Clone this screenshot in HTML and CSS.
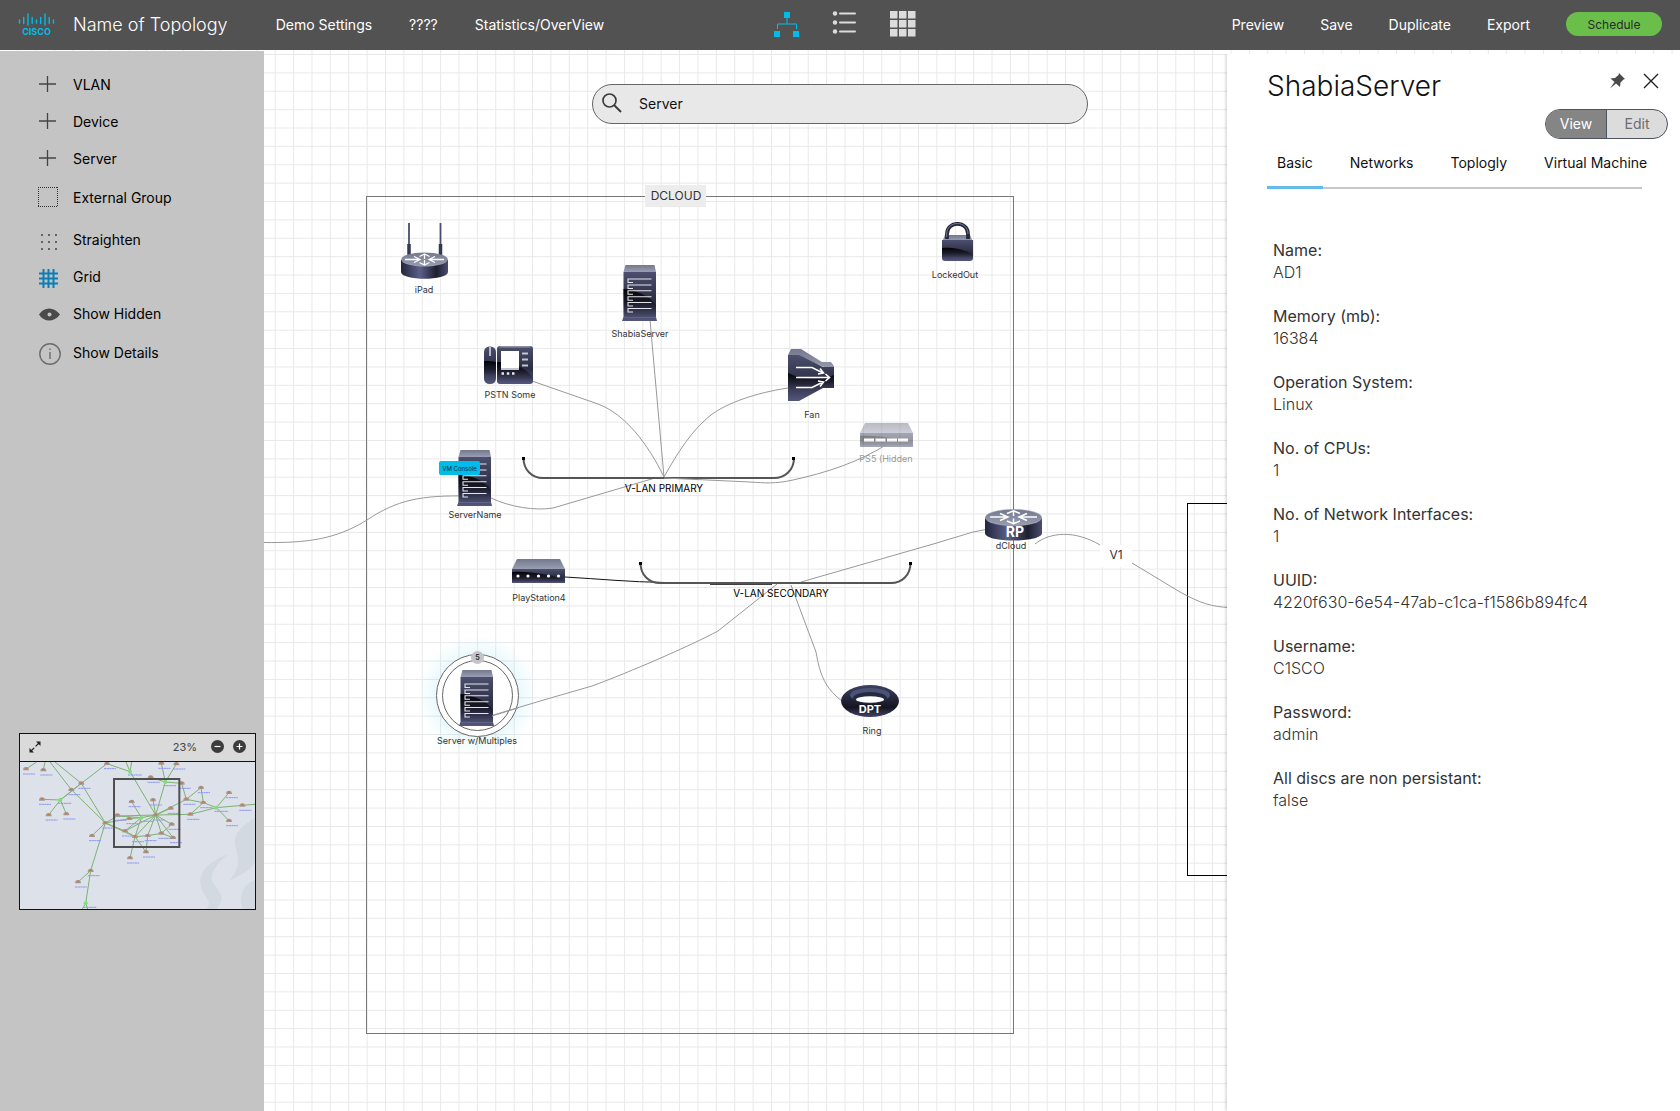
FILE: index.html
```
<!DOCTYPE html>
<html lang="en">
<head>
    <meta charset="UTF-8">
    <meta name="viewport" content="width=device-width, initial-scale=1.0">
    <title>Name of Topology</title>
    <link rel="stylesheet" href="styles.css">
</head>
<body>
    <!-- Top bar -->
    <header class="topbar">
        <div class="topbar-left">
            <svg class="logo" width="37" height="24" viewBox="0 0 37 24" role="img" aria-label="Cisco">
                <path d="M1.5 8v3M5.7 5.5v6M10 2v11M14.2 5.5v6M18.5 8v3M22.7 5.5v6M27 2v11M31.2 5.5v6M35.5 8v3" stroke="#00bceb" stroke-width="1.4" stroke-linecap="round"/>
                <text class="logo-text" x="18.5" y="22.5" text-anchor="middle">CISCO</text>
            </svg>
            <h1 class="topology-name">Name of Topology</h1>
            <nav class="topbar-nav">
                <a href="#">Demo Settings</a>
                <a href="#">????</a>
                <a href="#">Statistics/OverView</a>
            </nav>
        </div>

        <div class="view-switch">
            <button type="button" aria-label="Topology view">
                <svg width="26" height="26" viewBox="0 0 26 26">
                    <path d="M10 1h6v6h-6zM0 20h6v6H0zM19 20h6v6h-6z" fill="#00bceb"/>
                    <path d="M13 7v6M3.500 18v-5h19v5" fill="none" stroke="#00bceb"/>
                </svg>
            </button>
            <button type="button" aria-label="List view">
                <svg width="26" height="26" viewBox="0 0 26 26">
                    <g fill="#dcdcdc"><circle cx="3" cy="2.500" r="2.200"/><circle cx="3" cy="11.500" r="2.200"/><circle cx="3" cy="20.500" r="2.200"/></g>
                    <path d="M8 2.500h15M8 11.500h15M8 20.500h15" stroke="#dcdcdc" stroke-width="2" stroke-linecap="round"/>
                </svg>
            </button>
            <button type="button" aria-label="Tile view">
                <svg width="26" height="26" viewBox="0 0 26 26">
                    <path d="M0 0h7.500v7.500H0zM9 0h7.500v7.500H9zM18 0h7.500v7.500H18zM0 9h7.500v7.500H0zM9 9h7.500v7.500H9zM18 9h7.500v7.500H18zM0 18h7.500v7.500H0zM9 18h7.500v7.500H9zM18 18h7.500v7.500H18z" fill="#dcdcdc"/>
                </svg>
            </button>
        </div>

        <div class="topbar-actions">
            <button type="button">Preview</button>
            <button type="button">Save</button>
            <button type="button">Duplicate</button>
            <button type="button">Export</button>
            <button type="button" class="schedule-btn">Schedule</button>
        </div>
    </header>

    <main class="workspace">
        <!-- Canvas -->
        <svg class="canvas" role="img" aria-label="Topology canvas">
            <defs>
                <pattern id="grid" x="17.4" y="4" width="18.38" height="18.38" patternUnits="userSpaceOnUse">
                    <path d="M0.500 0v18.380M0 0.500h18.380" stroke="#e8e8e8"/>
                </pattern>
                <linearGradient id="top" x1="0" y1="0" x2="0" y2="1">
                    <stop offset="0" stop-color="#74788c"/>
                    <stop offset="1" stop-color="#9a9eb2"/>
                </linearGradient>
                <linearGradient id="body" x1="0" y1="0" x2="0" y2="1">
                    <stop offset="0" stop-color="#4c4f6e"/>
                    <stop offset="0.6" stop-color="#2b2d42"/>
                    <stop offset="1" stop-color="#54577c"/>
                </linearGradient>
                <linearGradient id="gloss" x1="0" y1="0" x2="0" y2="1">
                    <stop offset="0" stop-color="#000"/>
                    <stop offset="1" stop-color="#101020" stop-opacity="0"/>
                </linearGradient>
                <linearGradient id="drum" x1="0" y1="0" x2="1" y2="0">
                    <stop offset="0" stop-color="#23253a"/>
                    <stop offset="0.4" stop-color="#5c6089"/>
                    <stop offset="0.75" stop-color="#1e2030"/>
                    <stop offset="1" stop-color="#4a4d70"/>
                </linearGradient>
                <linearGradient id="torus" x1="0" y1="0" x2="0" y2="1">
                    <stop offset="0" stop-color="#3d4262"/>
                    <stop offset="0.7" stop-color="#14151f"/>
                    <stop offset="1" stop-color="#43466a"/>
                </linearGradient>
                <radialGradient id="glow">
                    <stop offset="0.7" stop-color="#00bceb" stop-opacity="0.08"/>
                    <stop offset="1" stop-color="#00bceb" stop-opacity="0"/>
                </radialGradient>

                <symbol id="server" viewBox="0 0 35 56">
                    <path d="M3.500 0h29l1.500 7H1.500z" fill="url(#top)"/>
                    <path d="M1.500 7H34v45l1 4H0l1.500-4z" fill="url(#body)"/>
                    <path d="M1.500 24C14 25 28 31 34 40v12H1.500z" fill="url(#gloss)"/>
                    <path d="M1 52.500h33" stroke="#6a6d90" stroke-width=".7"/>
                    <path d="M11 17.500H6V14h23.500M11 23.500H6V20h23.500M11 29.300H6v-3.500h23.500M11 35.200H6v-3.500h23.500M11 41H6v-3.500h23.500M11 47H6v-3.500h23.500" fill="none" stroke="#e6e6ea" stroke-width="1.100"/>
                </symbol>
                <symbol id="router" viewBox="0 0 57 32">
                    <path d="M0 9v15c0 10 57 10 57 0V9z" fill="url(#drum)"/>
                    <ellipse cx="28.500" cy="8.500" rx="28.300" ry="8.200" fill="url(#top)" stroke="#b4b7c8" stroke-width=".5"/>
                    <path d="M5 8h17M15 4.500l8 3.500-8 3.500M52 8H35M42 4.500L34 8l8 3.500M28.500 7V2M22 4.500l6.500-2.800L35 4.500M28.500 9.500v5M22 12l6.500 2.800L35 12" fill="none" stroke="#fff" stroke-width="1.500"/>
                </symbol>
                <symbol id="antenna-router" viewBox="0 0 47 56">
                    <path d="M8 0v24M39.500 0v24" stroke="#4a4d6c" stroke-width="1.800"/>
                    <path d="M8 21v12M39.500 21v12" stroke="#34374f" stroke-width="3.500"/>
                    <path d="M0 37v12c0 9 47 9 47 0V37z" fill="url(#drum)"/>
                    <ellipse cx="23.500" cy="36.500" rx="23.300" ry="7" fill="url(#top)"/>
                    <path d="M4 36.500h14M13 33.500l6 3-6 3M43 36.500H29M34 33.500l-6 3 6 3M23.500 36v-5M18.500 33.500l5-2.500 5 2.500M23.500 37v5M18.500 39.500l5 2.500 5-2.500" fill="none" stroke="#fff" stroke-width="1.300"/>
                </symbol>
                <symbol id="phone" viewBox="0 0 49 38">
                    <rect width="12" height="37.500" y=".5" rx="5.500" fill="url(#body)"/>
                    <path d="M0 15c4 0 9 0 12 1v14H0z" fill="url(#gloss)"/>
                    <path d="M6 1v9" stroke="#dfe0e8" stroke-width="1.500"/>
                    <rect x="13" width="36" height="38" rx="3" fill="url(#body)"/>
                    <path d="M15.500.800h31" stroke="#9194a8" stroke-width="1.500"/>
                    <path d="M13 16c14 0 28 4 36 16v4H13z" fill="url(#gloss)"/>
                    <path d="M17 5h18v18H17z" fill="#fff"/>
                    <path d="M17 23h18M38 7.500h6M38 13.500h6M38 19.500h6" stroke="#c3c5d0" stroke-width="2"/>
                    <path d="M17.500 27.500h2.500M22.800 27.500h2.500M28 27.500h2.500" stroke="#e6e6ea" stroke-width="2.500"/>
                </symbol>
                <symbol id="fan" viewBox="0 0 46 52">
                    <path d="M3 0h10l21 13h9l3 4v5L11 8 0 6z" fill="url(#top)"/>
                    <path d="M0 6h11l24 12h11v21H35L11 52H0z" fill="url(#body)"/>
                    <path d="M0 24c14 7 32 8 46 2v13H0z" fill="url(#gloss)"/>
                    <path d="M8 18.500h16l11 5.500M8 28.500h33M8 38.500h16l11-5.500M32 19.500l3.500 4.500-5.500 1M37.500 25l4 3.500-4 3.500M30 32l5.500 1-3.500 4.500" fill="none" stroke="#fff" stroke-width="1.600"/>
                </symbol>
                <symbol id="lock" viewBox="0 0 31 39">
                    <path d="M3 13h25l2.500 6H.5z" fill="url(#top)"/>
                    <path d="M5 17v-5C5-1.500 26-1.500 26 12v5" fill="none" stroke="#25273a" stroke-width="3.800"/>
                    <path d="M4.700 15v-3C4.700-2 26-2 26 12" fill="none" stroke="#8c90a8" stroke-width=".8"/>
                    <path d="M0 18h31v18q0 3-3 3H3q-3 0-3-3z" fill="url(#body)"/>
                    <path d="M0 26c12-1 22 2 31 6v4H0z" fill="url(#gloss)"/>
                </symbol>
                <symbol id="switch" viewBox="0 0 53 24">
                    <path d="M5 0h43l5 10H0z" fill="url(#top)"/>
                    <path d="M0 10h53v14H0z" fill="url(#body)"/>
                    <path d="M0 13c20-1 40 3 53 8v3H0z" fill="url(#gloss)"/>
                </symbol>
                <symbol id="ring" viewBox="0 0 58 32">
                    <ellipse cx="29" cy="16" rx="29" ry="16" fill="url(#torus)"/>
                    <ellipse cx="29" cy="10" rx="20" ry="7" fill="#4c5275"/>
                    <ellipse cx="29" cy="13" rx="17" ry="6" fill="#262a40"/>
                    <ellipse cx="29" cy="14.500" rx="14" ry="3.200" fill="#fff"/>
                </symbol>
            </defs>

            <rect width="100%" height="100%" fill="url(#grid)"/>

            <!-- Diagram, measured from the top of the window -->
            <g transform="translate(0 -50)">
                <rect class="zone" x="366.500" y="196.500" width="647" height="837"/>
                <rect x="645" y="185" width="61" height="22" fill="#ededed"/>
                <text class="zone-label" x="676" y="200">DCLOUD</text>
                <rect class="zone zone-dark" x="1187.500" y="503.500" width="647" height="372"/>

                <circle cx="477.500" cy="695.500" r="60" fill="url(#glow)"/>
                <circle cx="477.500" cy="695.500" r="41" fill="#fff" stroke="#666"/>
                <circle cx="477.500" cy="695.500" r="35" fill="none" stroke="#666"/>

                <!-- Links -->
                <g class="links">
                    <path d="M264 542.500C305 543 335 540 367 520C397 500 420 495 470 496"/>
                    <path d="M491 498C510 507 535 511 553 508L655 478"/>
                    <path d="M532 381L598 404C625 414 648 444 664 477"/>
                    <path d="M650 320L664 477"/>
                    <path d="M788 388C755 393 727 403 711 415C692 430 678 452 664 477"/>
                    <path d="M801 582L935 543.500L973 532L986 529.500"/>
                    <path d="M1035 544C1050 532 1075 530 1100 545M1132 563L1180 592C1200 603 1212 607 1230 607.500"/>
                    <path d="M490 716L547 699L592 686C630 672 690 646 718 631L777 584"/>
                    <path d="M791 585L816 652C820 675 825 688 842 701"/>
                    <path class="link-dark" d="M565 577C600 579 630 582 665 582.500M710 584.300H772"/>
                </g>

                <!-- VLAN rails -->
                <g class="rails">
                    <path d="M523.500 458C523.500 470 532 478 543 478H774C785 478 794 470 794 458"/>
                    <path d="M640.500 563C640.500 575 649 583 660 583H891C902 583 910.500 575 910.500 563"/>
                </g>
                <path d="M522 457h3v3h-3zM792 457h3v3h-3zM639 562h3v3h-3zM909 562h3v3h-3z"/>
                <text class="rail-label" x="664" y="492">V-LAN PRIMARY</text>
                <text class="rail-label" x="781" y="597">V-LAN SECONDARY</text>

                <!-- Nodes -->
                <use href="#antenna-router" x="401" y="223" width="47" height="56"/>
                <text class="node-label" x="424" y="293">iPad</text>

                <use href="#server" x="622" y="265" width="35" height="56"/>
                <text class="node-label" x="640" y="337">ShabiaServer</text>

                <use href="#lock" x="942" y="222" width="31" height="39"/>
                <text class="node-label" x="955" y="278">LockedOut</text>

                <use href="#phone" x="484" y="346" width="49" height="38"/>
                <text class="node-label" x="510" y="398">PSTN Some</text>

                <use href="#fan" x="788" y="349" width="46" height="52"/>
                <text class="node-label" x="812" y="418">Fan</text>

                <g opacity="0.5">
                    <use href="#switch" x="860" y="423" width="53" height="24"/>
                    <path d="M864 440h10M875.500 440h10M887 440h10M898 440h10" stroke="#fff" stroke-width="3"/>
                    <text class="node-label" x="886" y="462">PS5 (Hidden</text>
                </g>
                <path class="link" d="M889 443C860 462 825 473 793 480C775 484 765 483 750 482L664 478"/>

                <use href="#server" x="457" y="450" width="35" height="56"/>
                <text class="node-label" x="475" y="518">ServerName</text>

                <use href="#switch" x="512" y="559" width="53" height="24"/>
                <g fill="#fff"><circle cx="518" cy="576" r="1.600"/><circle cx="528" cy="576" r="1.600"/><circle cx="538.500" cy="576" r="1.600"/><circle cx="548.500" cy="576" r="1.600"/><circle cx="558.500" cy="576" r="1.600"/></g>
                <text class="node-label" x="539" y="601">PlayStation4</text>

                <use href="#router" x="985" y="509" width="57" height="32"/>
                <text class="badge-text badge-rp" x="1015" y="537">RP</text>
                <text class="node-label" x="1011" y="549">dCloud</text>

                <rect x="1100" y="545" width="32" height="22" fill="#fff"/>
                <text class="zone-label" x="1116" y="559">V1</text>

                <use href="#ring" x="841" y="685" width="58" height="32"/>
                <text class="badge-text" x="870" y="713">DPT</text>
                <text class="node-label" x="872" y="734">Ring</text>

                <use href="#server" x="459" y="670" width="35" height="56"/>
                <path class="link" d="M492 716L518 708"/>
                <circle cx="477.500" cy="657.500" r="6.500" fill="#c4c4c4"/>
                <text class="count" x="477.500" y="660">5</text>
                <text class="node-label" x="477" y="744">Server w/Multiples</text>
            </g>
        </svg>
        <button type="button" class="vm-console">VM Console</button>

        <!-- Search -->
        <form class="search" role="search">
            <label for="search-input" aria-label="Search">
                <svg width="20" height="20" viewBox="0 0 20 20">
                    <circle cx="7.500" cy="7.500" r="6.500" fill="none" stroke="#3c3c3c" stroke-width="1.700"/>
                    <path d="M12 12l7 7" stroke="#3c3c3c" stroke-width="2"/>
                </svg>
            </label>
            <input type="text" id="search-input" name="search" value="Server">
        </form>

        <!-- Tools -->
        <aside class="sidebar">
            <div class="tool-group">
                <button type="button" class="tool">
                    <svg width="24" height="24" viewBox="0 0 24 24"><path d="M10.500 3v16M2 11h17" stroke="#444" stroke-width="1.300"/></svg>
                    VLAN
                </button>
                <button type="button" class="tool">
                    <svg width="24" height="24" viewBox="0 0 24 24"><path d="M10.500 3v16M2 11h17" stroke="#444" stroke-width="1.300"/></svg>
                    Device
                </button>
                <button type="button" class="tool">
                    <svg width="24" height="24" viewBox="0 0 24 24"><path d="M10.500 3v16M2 11h17" stroke="#444" stroke-width="1.300"/></svg>
                    Server
                </button>
                <button type="button" class="tool tool-tall">
                    <svg width="24" height="24" viewBox="0 0 24 24"><path d="M1 1.500h20M1 20.500h20M1.500 1v20M20.500 1v20" stroke="#333" stroke-dasharray="1 1"/></svg>
                    External Group
                </button>
            </div>
            <div class="tool-group">
                <button type="button" class="tool">
                    <svg width="24" height="24" viewBox="0 0 24 24"><path d="M5 7h0M12 7h0M19 7h0M5 14h0M12 14h0M19 14h0M5 21h0M12 21h0M19 21h0" stroke="#444" stroke-width="2" stroke-linecap="round"/></svg>
                    Straighten
                </button>
                <button type="button" class="tool">
                    <svg width="24" height="24" viewBox="0 0 24 24"><path d="M6.500 4v19M11.500 4v19M16.500 4v19M2 8.500h19M2 13.500h19M2 18.500h19" stroke="#0a7eb5" stroke-width="2"/></svg>
                    Grid
                </button>
                <button type="button" class="tool">
                    <svg width="24" height="24" viewBox="0 0 24 24"><path d="M2 12.500C7 4.500 17 4.500 23 12.500 17 20.500 7 20.500 2 12.500z" fill="#4a4a4a"/><circle cx="12.500" cy="12.500" r="2" fill="#c4c4c4"/></svg>
                    Show Hidden
                </button>
                <button type="button" class="tool tool-tall">
                    <svg width="24" height="24" viewBox="0 0 24 24"><circle cx="13" cy="13" r="10.200" fill="none" stroke="#6c6c6c" stroke-width="1.400"/><path d="M13 11v7M13 7.500v1.500" stroke="#6c6c6c" stroke-width="1.400"/></svg>
                    Show Details
                </button>
            </div>

            <!-- Overview map -->
            <section class="minimap">
                <div class="minimap-bar">
                    <button type="button" class="minimap-expand" aria-label="Expand map">
                        <svg width="12" height="12" viewBox="0 0 12 12"><path d="M7 .5h4.500V5zM5 11.500H.5V7z" fill="#222"/><path d="M2 10l8-8" stroke="#222" stroke-width="1.200" stroke-dasharray="4.500 2"/></svg>
                    </button>
                    <span class="minimap-zoom">23%</span>
                    <button type="button" aria-label="Zoom out">
                        <svg width="13" height="13" viewBox="0 0 13 13"><circle cx="6.500" cy="6.500" r="6.500" fill="#3c3c3c"/><path d="M3.500 6.500h6" stroke="#fff" stroke-width="1.200"/></svg>
                    </button>
                    <button type="button" aria-label="Zoom in">
                        <svg width="13" height="13" viewBox="0 0 13 13"><circle cx="6.500" cy="6.500" r="6.500" fill="#3c3c3c"/><path d="M3.500 6.500h6M6.500 3.500v6" stroke="#fff" stroke-width="1.200"/></svg>
                    </button>
                </div>
                <svg class="minimap-view" viewBox="60 126 705 441" role="img" aria-label="Topology overview">
                    <defs>
                        <symbol id="mini" viewBox="-20 -10 60 32" overflow="visible">
                            <path d="M-9 4q0-10 9-10t9 10z" fill="#a39b98"/>
                            <circle r="3.500" cy="-1" fill="#c87b50"/>
                            <path d="M-9 15h36" stroke="#8f96ee" stroke-width="3" stroke-dasharray="7 1"/>
                        </symbol>
                    </defs>
                    <path d="M685 402C640 420 590 450 603 500C612 535 640 540 620 567H650C680 535 660 520 640 490C625 465 650 430 685 402zM765 295C720 320 695 350 708 385C720 430 715 450 688 482C735 460 765 440 765 420zM765 480C735 490 720 520 723 545L728 567H765z" fill="#d3d9e1"/>
                    <g fill="none" stroke="#7fb174" stroke-width="3">
                        <path d="M110 126L78 147M135 126L130 150M150 126L214 209L316 309M165 126L244 190L316 309M321 131L244 190L181 240M126 238L181 240L146 285M181 240L199 282M321 131L390 155L378 126M390 155L395 126M390 155L467 285M244 190L181 240"/>
                        <path d="M316 309L276 347M316 309L272 452L234 486M272 452L257 550L247 567M257 550L263 567M316 309L352 288L424 293L467 285L559 238L603 203L610 248L559 238L545 190L496 186L484 130M496 186L529 132M496 186L452 172M496 186L467 285L459 240M395 245L424 293L388 296L316 309L375 333L405 350L443 347L484 340L515 313L467 285L512 265"/>
                        <path d="M467 285L375 333M467 285L405 350L390 414M467 285L443 347L438 396M467 285L484 340L519 353L467 285L571 283L649 263L610 248M649 263L687 218M649 263L687 302M649 263L727 256L765 253M424 293L405 350L438 396M571 283L610 248M424 293L375 333M316 309L405 350M352 288L467 285"/>
                    </g>
                    <g fill="#7ee07a"><circle cx="181" cy="239" r="6"/><circle cx="390" cy="155" r="6"/><circle cx="496" cy="186" r="6"/><circle cx="649" cy="263" r="6"/><circle cx="257" cy="550" r="6"/><circle cx="424" cy="293" r="6"/></g>
                    <g>
                        <use href="#mini" x="58" y="137" width="60" height="32"/>
                        <use href="#mini" x="110" y="140" width="60" height="32"/>
                        <use href="#mini" x="301" y="121" width="60" height="32"/>
                        <use href="#mini" x="224" y="180" width="60" height="32"/>
                        <use href="#mini" x="194" y="199" width="60" height="32"/>
                        <use href="#mini" x="106" y="228" width="60" height="32"/>
                        <use href="#mini" x="126" y="275" width="60" height="32"/>
                        <use href="#mini" x="179" y="272" width="60" height="32"/>
                        <use href="#mini" x="296" y="299" width="60" height="32"/>
                        <use href="#mini" x="256" y="337" width="60" height="32"/>
                        <use href="#mini" x="252" y="442" width="60" height="32"/>
                        <use href="#mini" x="214" y="476" width="60" height="32"/>
                        <use href="#mini" x="464" y="120" width="60" height="32"/>
                        <use href="#mini" x="509" y="122" width="60" height="32"/>
                        <use href="#mini" x="432" y="162" width="60" height="32"/>
                        <use href="#mini" x="525" y="180" width="60" height="32"/>
                        <use href="#mini" x="583" y="193" width="60" height="32"/>
                        <use href="#mini" x="539" y="228" width="60" height="32"/>
                        <use href="#mini" x="590" y="238" width="60" height="32"/>
                        <use href="#mini" x="667" y="208" width="60" height="32"/>
                        <use href="#mini" x="707" y="246" width="60" height="32"/>
                        <use href="#mini" x="667" y="292" width="60" height="32"/>
                        <use href="#mini" x="551" y="273" width="60" height="32"/>
                        <use href="#mini" x="375" y="235" width="60" height="32"/>
                        <use href="#mini" x="439" y="230" width="60" height="32"/>
                        <use href="#mini" x="492" y="255" width="60" height="32"/>
                        <use href="#mini" x="447" y="275" width="60" height="32"/>
                        <use href="#mini" x="332" y="276" width="60" height="32"/>
                        <use href="#mini" x="368" y="286" width="60" height="32"/>
                        <use href="#mini" x="355" y="323" width="60" height="32"/>
                        <use href="#mini" x="385" y="340" width="60" height="32"/>
                        <use href="#mini" x="423" y="337" width="60" height="32"/>
                        <use href="#mini" x="464" y="330" width="60" height="32"/>
                        <use href="#mini" x="495" y="303" width="60" height="32"/>
                        <use href="#mini" x="499" y="343" width="60" height="32"/>
                        <use href="#mini" x="418" y="386" width="60" height="32"/>
                        <use href="#mini" x="370" y="404" width="60" height="32"/>
                    </g>
                    <path d="M384 165h42M490 197h38M175 250h40M643 274h42M250 562h40M420 304h40" stroke="#8f96ee" stroke-width="3" stroke-dasharray="7 1"/>
                    <rect x="342" y="177" width="196" height="204" fill="none" stroke="#4f4f4f" stroke-width="6"/>
                </svg>
            </section>
        </aside>

        <!-- Details panel -->
        <section class="panel">
            <div class="panel-head">
                <h2>ShabiaServer</h2>
                <div class="panel-icons">
                    <button type="button" aria-label="Pin">
                        <svg width="16" height="16" viewBox="0 0 16 16"><path d="M10 0l6 6-1.500.500L11.500 9.500l-.5 4.500L7 10.500 1 15.500 5.500 9 1.500 5.500 6 5l3.500-3z" fill="#4a4a4a"/></svg>
                    </button>
                    <button type="button" aria-label="Close">
                        <svg width="16" height="16" viewBox="0 0 16 16"><path d="M1 1l14 14M15 1L1 15" stroke="#222" stroke-width="1.400"/></svg>
                    </button>
                </div>
            </div>

            <div class="mode-toggle">
                <button type="button" class="active">View</button>
                <button type="button">Edit</button>
            </div>

            <div class="tabs" role="tablist">
                <button type="button" class="tab active" role="tab" aria-selected="true">Basic</button>
                <button type="button" class="tab" role="tab">Networks</button>
                <button type="button" class="tab" role="tab">Toplogly</button>
                <button type="button" class="tab" role="tab">Virtual Machine</button>
            </div>

            <dl class="details">
                <dt>Name:</dt>
                <dd>AD1</dd>
                <dt>Memory (mb):</dt>
                <dd>16384</dd>
                <dt>Operation System:</dt>
                <dd>Linux</dd>
                <dt>No. of CPUs:</dt>
                <dd>1</dd>
                <dt>No. of Network Interfaces:</dt>
                <dd>1</dd>
                <dt>UUID:</dt>
                <dd>4220f630-6e54-47ab-c1ca-f1586b894fc4</dd>
                <dt>Username:</dt>
                <dd>C1SCO</dd>
                <dt>Password:</dt>
                <dd>admin</dd>
                <dt>All discs are non persistant:</dt>
                <dd>false</dd>
            </dl>
        </section>
    </main>
</body>
</html>
```
FILE: styles.css
```
* {
    box-sizing: border-box;
    margin: 0;
    padding: 0;
}

body {
    font-family: Inter, "Liberation Sans", sans-serif;
    font-size: 14px;
    color: #111;
    background-color: #fff;
    display: flex;
    flex-direction: column;
    min-height: 100vh;
}

button {
    font: inherit;
    color: inherit;
    background: none;
    border: none;
    cursor: pointer;
}

svg {
    display: block;
}

/* Top bar */
.topbar {
    display: grid;
    grid-template-columns: 1fr auto 1fr;
    align-items: center;
    height: 50px;
    padding: 0 18px 2px;
    background-color: #525252;
    color: #fff;
    white-space: nowrap;
}

.topbar-left {
    display: flex;
    align-items: center;
}

.logo-text {
    font-size: 9px;
    font-weight: 700;
    fill: #00bceb;
}

.topology-name {
    font-size: 18px;
    font-weight: 300;
    margin-left: 18px;
}

.topbar-nav {
    display: flex;
    gap: 37px;
    margin-left: 48px;
}

.topbar-nav a {
    color: #fff;
    text-decoration: none;
}

.view-switch {
    display: flex;
    gap: 32px;
    margin-left: 10px;
}

.topbar-actions {
    display: flex;
    align-items: center;
    justify-content: flex-end;
    gap: 36px;
}

.topbar-actions .schedule-btn {
    width: 96px;
    height: 24px;
    border-radius: 12px;
    background-color: #6abf4b;
    color: #2a2a2a;
    font-size: 12px;
}

/* Workspace */
.workspace {
    position: relative;
    flex: 1;
    display: flex;
    justify-content: space-between;
}

.canvas {
    position: absolute;
    top: 0;
    left: 0;
    width: 100%;
    height: 100%;
}

.zone {
    fill: none;
    stroke: #777;
}

.zone-dark {
    stroke: #000;
}

.links,
.link {
    fill: none;
    stroke: #999;
}

.link-dark {
    stroke: #111;
}

.rails {
    fill: none;
    stroke: #555;
    stroke-width: 2px;
}

.canvas text {
    text-anchor: middle;
    fill: #333;
}

.canvas .zone-label {
    font-size: 12px;
}

.canvas .rail-label {
    font-size: 10px;
    fill: #000;
}

.canvas .node-label {
    font-size: 9px;
}

.canvas .badge-text {
    font-size: 11px;
    font-weight: 700;
    fill: #fff;
}

.canvas .badge-rp {
    font-size: 14px;
}

.canvas .count {
    font-size: 7px;
    font-weight: 700;
}

.vm-console {
    position: absolute;
    top: 411px;
    left: 439px;
    width: 41px;
    height: 14px;
    border-radius: 2px;
    background-color: #00bceb;
    color: #123;
    font-size: 6px;
}

/* Search */
.search {
    position: absolute;
    top: 34px;
    left: 0;
    right: 0;
    display: flex;
    align-items: center;
    width: 496px;
    height: 40px;
    margin: 0 auto;
    padding: 0 9px 2px;
    gap: 17px;
    border: 1px solid #666;
    border-radius: 20px;
    background-color: #e8e8e8;
}

.search input {
    flex: 1;
    border: none;
    outline: none;
    background: none;
    font: inherit;
    color: #111;
}

/* Sidebar */
.sidebar {
    position: relative;
    display: flex;
    flex-direction: column;
    width: 264px;
    margin-top: 1px;
    padding: 15px 8px 201px 19px;
    background-color: #c4c4c4;
}

.tool-group {
    display: flex;
    flex-direction: column;
    margin-bottom: 3px;
}

.tool {
    display: flex;
    align-items: center;
    gap: 12px;
    height: 37px;
    padding-left: 18px;
    text-align: left;
    color: #000;
}

.tool-tall {
    height: 41px;
}

.minimap {
    margin-top: auto;
    border: 1px solid #111;
    background-color: #dde1ea;
}

.minimap-bar {
    display: flex;
    align-items: center;
    gap: 9px;
    height: 28px;
    padding: 0 9px 2px;
    border-bottom: 1px solid #111;
    background-color: #dadada;
}

.minimap-expand {
    margin-right: auto;
}

.minimap-zoom {
    margin-right: 5px;
    font-size: 11px;
    color: #444;
}

.minimap-view {
    width: 100%;
}

/* Details panel */
.panel {
    position: relative;
    width: 453px;
    margin-top: 4px;
    padding: 12px 12px 0 40px;
    background-color: #fff;
    box-shadow: -1px 0 3px rgba(0, 0, 0, 0.2);
    clip-path: inset(0 0 0 -4px);
}

.panel-head {
    display: flex;
    justify-content: space-between;
    align-items: flex-start;
    height: 43px;
}

.panel-head h2 {
    font-size: 28px;
    font-weight: 300;
    line-height: 40px;
}

.panel-icons {
    display: flex;
    gap: 18px;
    padding: 7px 9px;
}

.mode-toggle {
    display: flex;
    width: 123px;
    height: 30px;
    margin-left: auto;
    border: 1px solid #4b535f;
    border-radius: 15px;
    overflow: hidden;
    background-color: #dcdcdc;
    color: #6d6d6d;
}

.mode-toggle button {
    flex: 1;
    padding-bottom: 2px;
}

.mode-toggle .active {
    background-color: #858585;
    border-right: 1px solid #4b535f;
    color: #fff;
}

.tabs {
    display: flex;
    gap: 17px;
    height: 50px;
    margin-right: 26px;
    border-bottom: 2px solid #c8c8c8;
    white-space: nowrap;
}

.tab {
    padding: 0 10px 2px;
}

.tab.active {
    height: 50px;
    border-bottom: 3px solid #64bbe3;
    padding-bottom: 0;
}

.details {
    margin-top: 50px;
    padding-left: 6px;
    font-size: 16px;
    line-height: 22px;
    color: #333;
}

.details dd {
    margin-bottom: 22px;
    font-weight: 300;
}
```
